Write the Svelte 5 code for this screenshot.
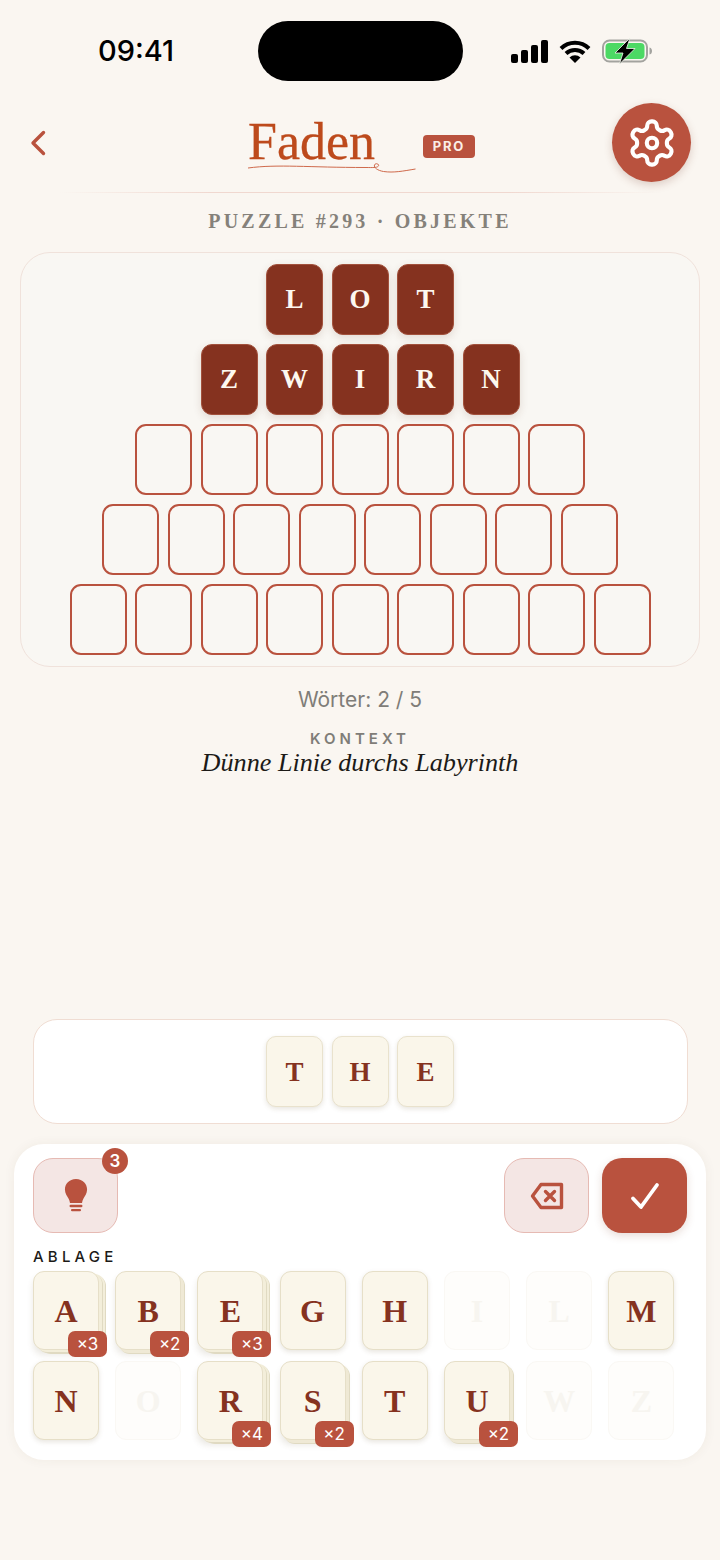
<script>
  const solved = [["L", "O", "T"], ["Z", "W", "I", "R", "N"]];
  const emptyRows = [7, 8, 9];
  const typed = ["T", "H", "E"];
  const stock = [
    ["A", 3], ["B", 2], ["E", 3], ["G", 1], ["H", 1], ["I", 0], ["L", 0], ["M", 1],
    ["N", 1], ["O", 0], ["R", 4], ["S", 2], ["T", 1], ["U", 2], ["W", 0], ["Z", 0],
  ];
</script>

<main class="screen">
  <div class="status">
    <span class="time">09:41</span>
    <div class="island"></div>
    <div class="indicators">
      <svg width="37" height="23" viewBox="0 0 37 23">
        <rect x="0" y="14" width="7" height="9" rx="2" />
        <rect x="10" y="10" width="7" height="13" rx="2" />
        <rect x="20" y="5" width="7" height="18" rx="2" />
        <rect x="30" y="0" width="7" height="23" rx="2" />
      </svg>
      <svg width="32" height="23" viewBox="0 0 32 23">
        <path d="M2 8.5a20 20 0 0 1 28 0M7 13.5a13 13 0 0 1 18 0" fill="none" stroke="#000" stroke-width="4" />
        <path d="M10.500 17.500a8 8 0 0 1 11 0L16 23z" />
      </svg>
      <svg width="51" height="26" viewBox="0 0 51 26">
        <rect x="1" y="2.500" width="44" height="21" rx="6.500" fill="none" stroke="#a3a39f" stroke-width="2" />
        <rect x="3.500" y="5" width="39" height="16" rx="4" fill="#4cd964" />
        <path d="M47.500 9.500c2 .5 2.500 2 2.500 3.500s-.5 3-2.500 3.500z" fill="#a3a39f" />
        <path d="M28 0 13 15h8l-3.500 11L33 10.500h-8.500z" stroke="#f3f7ee" stroke-width="0.800" />
      </svg>
    </div>
  </div>

  <header class="top">
    <button class="back" aria-label="Zurück">
      <svg width="18" height="28" viewBox="0 0 18 28"><path d="M14.500 3.500 4 14l10.500 10.500" fill="none" stroke="#b9523e" stroke-width="3.400" stroke-linecap="round" stroke-linejoin="round" /></svg>
    </button>
    <div class="brand">
      <div class="logo">
        <span>Faden</span>
        <svg class="thread" width="168" height="12" viewBox="0 0 168 12">
          <path d="M0 7C30 3 60 6.500 118 6.500c6 0 11 .5 12.500-1.500 1-2-3-3.500-4-1s3 5.500 9 6.500c10 1.500 20-.5 32-2.500" fill="none" stroke="#cf6a4c" stroke-width="1" />
        </svg>
      </div>
      <span class="pro">PRO</span>
    </div>
    <button class="gear" aria-label="Einstellungen">
      <svg width="52" height="52" viewBox="0 0 24 24" fill="none" stroke="#fff" stroke-width="1.900" stroke-linecap="round" stroke-linejoin="round">
        <path d="M12.220 2h-.44a2 2 0 0 0-2 2v.18a2 2 0 0 1-1 1.730l-.43.25a2 2 0 0 1-2 0l-.15-.08a2 2 0 0 0-2.730.73l-.22.38a2 2 0 0 0 .73 2.730l.15.1a2 2 0 0 1 1 1.720v.51a2 2 0 0 1-1 1.740l-.15.09a2 2 0 0 0-.73 2.730l.22.38a2 2 0 0 0 2.730.73l.15-.08a2 2 0 0 1 2 0l.43.25a2 2 0 0 1 1 1.730V20a2 2 0 0 0 2 2h.44a2 2 0 0 0 2-2v-.18a2 2 0 0 1 1-1.730l.43-.25a2 2 0 0 1 2 0l.15.08a2 2 0 0 0 2.730-.73l.22-.39a2 2 0 0 0-.73-2.730l-.15-.08a2 2 0 0 1-1-1.740v-.5a2 2 0 0 1 1-1.740l.15-.09a2 2 0 0 0 .73-2.730l-.22-.38a2 2 0 0 0-2.730-.73l-.15.08a2 2 0 0 1-2 0l-.43-.25a2 2 0 0 1-1-1.730V4a2 2 0 0 0-2-2z" />
        <circle cx="12" cy="12" r="2.400" />
      </svg>
    </button>
  </header>
  <div class="rule"></div>

  <p class="puzzle">PUZZLE #293 · OBJEKTE</p>

  <section class="board">
    {#each solved as word}
      <div class="row">
        {#each word as letter}
          <div class="cell solved">{letter}</div>
        {/each}
      </div>
    {/each}
    {#each emptyRows as count}
      <div class="row">
        {#each Array(count) as _}
          <div class="cell"></div>
        {/each}
      </div>
    {/each}
  </section>

  <p class="progress">Wörter: 2 / 5</p>
  <p class="context-label">KONTEXT</p>
  <p class="context">Dünne Linie durchs Labyrinth</p>

  <section class="tray">
    {#each typed as letter}
      <div class="typed">{letter}</div>
    {/each}
  </section>

  <section class="panel">
    <div class="actions">
      <button class="action hint" aria-label="Tipp">
        <svg width="24" height="36" viewBox="0 0 26 37">
          <path d="M13 0C5.500 0 1 5.500 1 11.500c0 4.500 2.500 7 4 10 .8 1.600 1.200 3 1.500 4.500h13c.3-1.500.7-2.900 1.500-4.500 1.500-3 4-5.500 4-10C25 5.500 20.500 0 13 0z" fill="#b9523e" />
          <rect x="6" y="28" width="14" height="2.600" rx="1.300" fill="#b9523e" />
          <rect x="7.500" y="32.500" width="11" height="2.600" rx="1.300" fill="#b9523e" />
        </svg>
        <span class="hint-count">3</span>
      </button>
      <button class="action erase" aria-label="Löschen">
        <svg width="34" height="28" viewBox="0 0 34 28" fill="none" stroke="#b9523e" stroke-width="3.400" stroke-linejoin="round" stroke-linecap="round">
          <path d="M11 2.500h20.500v23H11L2.500 14z" />
          <path d="m15.500 9.500 9 9M24.500 9.500l-9 9" />
        </svg>
      </button>
      <button class="action submit" aria-label="Prüfen">
        <svg width="30" height="28" viewBox="0 0 30 28"><path d="M3 16.500 11 25 27 3" fill="none" stroke="#fff" stroke-width="3.800" stroke-linecap="round" stroke-linejoin="round" /></svg>
      </button>
    </div>

    <p class="shelf-label">ABLAGE</p>
    <div class="shelf">
      {#each stock as [letter, count]}
        <div class="stock" class:used={count === 0} class:two={count === 2} class:many={count > 2}>
          {letter}
          {#if count > 1}
            <span class="count">×{count}</span>
          {/if}
        </div>
      {/each}
    </div>
  </section>
</main>

<style>
  :global(body) {
    background: #faf6f1;
  }
  p {
    margin: 0;
  }
  button {
    border: none;
    padding: 0;
    background: none;
    display: flex;
    align-items: center;
    justify-content: center;
  }
  .screen {
    width: 720px;
    height: 1560px;
    display: flex;
    flex-direction: column;
    align-items: center;
    box-sizing: border-box;
    padding-bottom: 100px;
    background: #faf6f1;
    font-family: "Liberation Serif", serif;
  }
  .status {
    width: 100%;
    box-sizing: border-box;
    padding-top: 21px;
    display: grid;
    grid-template-columns: 1fr 205px 1fr;
    align-items: center;
  }
  .time {
    justify-self: start;
    margin-left: 98px;
    font: 500 29px/60px Inter, sans-serif;
    color: #000;
  }
  .island {
    height: 60px;
    border-radius: 30px;
    background: #000;
  }
  .indicators {
    display: flex;
    align-items: center;
    gap: 11px;
    margin-left: 48px;
  }
  .top {
    width: 100%;
    box-sizing: border-box;
    margin-top: 22px;
    height: 79px;
    padding: 0 29px;
    display: grid;
    grid-template-columns: 1fr auto 1fr;
    align-items: center;
  }
  .back {
    width: 18px;
  }
  .brand {
    display: flex;
    align-items: center;
    gap: 8px;
    margin-left: 3px;
  }
  .logo {
    position: relative;
    width: 167px;
    height: 64px;
    font-size: 52px;
    line-height: 62px;
    color: #bd4a1c;
    -webkit-text-stroke: 0.3px #bd4a1c;
  }
  .thread {
    position: absolute;
    left: 0;
    top: 50px;
  }
  .pro {
    width: 52px;
    height: 23px;
    margin-top: 7px;
    border-radius: 4px;
    background: #b9523e;
    color: #fbeee8;
    font: 700 13px/23px Inter, sans-serif;
    letter-spacing: 1.800px;
    text-align: center;
  }
  .gear {
    justify-self: end;
    width: 79px;
    height: 79px;
    border-radius: 50%;
    background: #b9523e;
    box-shadow: 0 3px 8px rgba(120, 60, 40, 0.22);
  }
  .rule {
    width: 600px;
    height: 1px;
    margin-top: 10px;
    background: linear-gradient(90deg, transparent, #f0d8d0 25%, #f0d8d0 75%, transparent);
  }
  .puzzle {
    margin-top: 16px;
    font-size: 20px;
    line-height: 24px;
    font-weight: 700;
    letter-spacing: 3.200px;
    color: #85817a;
  }
  .board {
    width: 680px;
    height: 415px;
    margin-top: 19px;
    box-sizing: border-box;
    padding-top: 11px;
    border: 1px solid #f0e2db;
    border-radius: 30px;
    background: #f9f7f3;
    display: flex;
    flex-direction: column;
    gap: 9px;
    align-items: center;
  }
  .row {
    display: flex;
    gap: 8.500px;
  }
  .cell {
    width: 57px;
    height: 71px;
    box-sizing: border-box;
    border: 2px solid #b9523e;
    border-radius: 11px;
    font-size: 27px;
    font-weight: 700;
    line-height: 67px;
    text-align: center;
  }
  .cell.solved {
    border: 1px solid #a2513c;
    background: #85321f;
    color: #fdf8ef;
    line-height: 69px;
    box-shadow: 0 3px 8px rgba(90, 50, 30, 0.14);
  }
  .progress {
    margin-top: 20px;
    font: 400 21px/26px Inter, sans-serif;
    color: #7f7d78;
  }
  .context-label {
    margin-top: 16px;
    font: 600 15px/20px Inter, sans-serif;
    letter-spacing: 4px;
    color: #7f7d78;
  }
  .context {
    margin-top: -2px;
    font-size: 26.200px;
    line-height: 32px;
    font-style: italic;
    color: #1c1a17;
  }
  .tray {
    margin-top: auto;
    width: 655px;
    height: 105px;
    box-sizing: border-box;
    border: 1.500px solid #f0ddd3;
    border-radius: 24px;
    background: #fff;
    display: flex;
    align-items: center;
    justify-content: center;
    gap: 8.500px;
  }
  .typed {
    width: 57px;
    height: 71px;
    box-sizing: border-box;
    border: 1.500px solid #e9e2cd;
    border-radius: 10px;
    background: #faf6ea;
    color: #85321f;
    font-size: 27px;
    font-weight: 700;
    line-height: 70px;
    text-align: center;
    box-shadow: 0 2px 5px rgba(90, 70, 30, 0.14);
  }
  .panel {
    width: 692px;
    height: 316px;
    margin-top: 20px;
    box-sizing: border-box;
    padding: 14px 19px 0;
    border-radius: 30px;
    background: #fff;
    box-shadow: 0 0 12px rgba(90, 70, 40, 0.06);
  }
  .actions {
    display: flex;
    gap: 13px;
  }
  .action {
    position: relative;
    width: 85px;
    height: 75px;
    box-sizing: border-box;
    border-radius: 20px;
  }
  .hint {
    margin-right: auto;
  }
  .hint,
  .erase {
    border: 1.500px solid #e6bab3;
    background: #f4e6e4;
  }
  .submit {
    background: #b9523e;
    box-shadow: 0 3px 8px rgba(120, 60, 40, 0.18);
  }
  .hint-count {
    position: absolute;
    right: -11px;
    top: -11px;
    width: 26px;
    height: 26px;
    border-radius: 50%;
    background: #b9523e;
    color: #fff;
    font: 600 17px/26px Inter, sans-serif;
    text-align: center;
  }
  .shelf-label {
    margin-top: 14px;
    font: 500 15px/20px Inter, sans-serif;
    letter-spacing: 4.200px;
    color: #1c1a17;
  }
  .shelf {
    margin-top: 4px;
    display: grid;
    grid-template-columns: repeat(8, 66px);
    column-gap: 16.200px;
    row-gap: 11px;
  }
  .stock {
    position: relative;
    height: 79px;
    box-sizing: border-box;
    border: 1.500px solid #e6dfc8;
    border-radius: 11px;
    background: #faf6ea;
    color: #85321f;
    font-size: 32px;
    font-weight: 700;
    line-height: 78px;
    text-align: center;
    box-shadow: 0 2px 5px rgba(90, 70, 30, 0.14);
  }
  .stock.two {
    box-shadow: 3px 3px 0 #efe9d5, 4px 4px 0 #e0dac2, 0 5px 6px rgba(90, 70, 30, 0.12);
  }
  .stock.many {
    box-shadow: 3px 2px 0 #f3eeda, 4px 3px 0 #e0dac2, 6px 3px 0 #f3eeda, 7px 4px 0 #e0dac2, 0 5px 6px rgba(90, 70, 30, 0.12);
  }
  .stock.used {
    border-color: #faf8f4;
    background: #fefdfb;
    color: #f7f5f0;
    box-shadow: none;
  }
  .count {
    position: absolute;
    right: -9px;
    bottom: -8px;
    width: 39px;
    height: 26px;
    border-radius: 7px;
    background: #b9523e;
    color: #fff;
    font: 400 17px/26px Inter, sans-serif;
    text-align: center;
  }
</style>
